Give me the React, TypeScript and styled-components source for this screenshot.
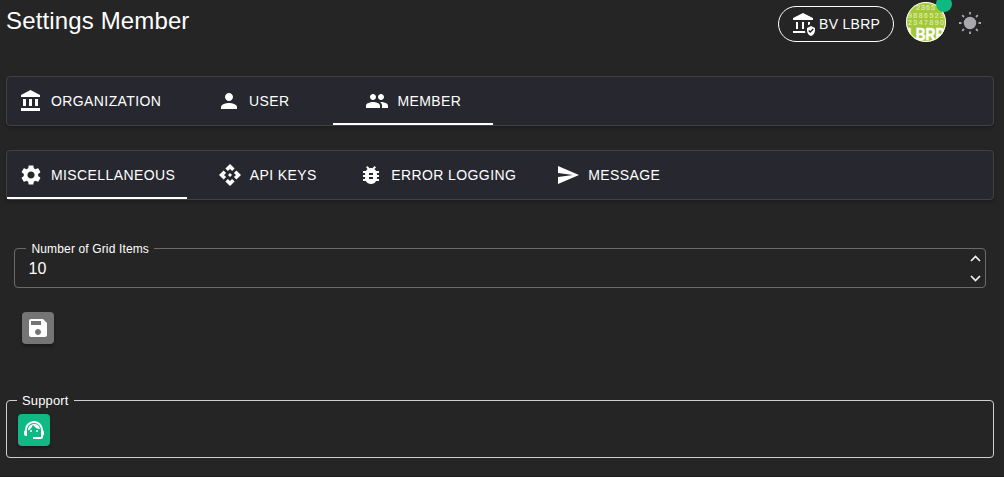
import React from 'react';
import styled, { createGlobalStyle } from 'styled-components';
import {
  MdPerson, MdPeople, MdSettings, MdApi, MdSend,
  MdSave, MdSupportAgent, MdAssuredWorkload,
} from 'react-icons/md';

const GlobalStyle = createGlobalStyle`
  * { box-sizing: border-box; }
  body {
    margin: 0;
    background: #252525;
    color: #fff;
    font-family: "Liberation Sans", Arial, sans-serif;
    overflow: hidden;
  }
  button { font: inherit; color: inherit; border: 0; padding: 0; background: none; }
`;

const Page = styled.main`
  height: 477px;
  padding: 0 10px 0 6px;
  display: flex;
  flex-direction: column;
  border-bottom: 1px solid #1c1c1c;
`;

const Header = styled.header`
  display: flex;
  align-items: flex-start;
  justify-content: space-between;
  height: 76px;
`;

const Title = styled.h1`
  margin: 0;
  padding-top: 5px;
  font-size: 24px;
  line-height: 32px;
  font-weight: 400;
  letter-spacing: 0.14px;
`;

const Actions = styled.div`
  display: flex;
  align-items: flex-start;
`;

const OrgChip = styled.button`
  display: flex;
  align-items: center;
  gap: 4px;
  width: 116px;
  height: 36px;
  margin-top: 6px;
  padding-left: 12px;
  border: 1px solid #fff;
  border-radius: 18px;
  font-size: 14px;
  letter-spacing: 0.3px;
  white-space: nowrap;
`;

const AvatarWrap = styled.div`
  position: relative;
  width: 40px;
  height: 40px;
  margin: 2px 0 0 12px;
`;

const StatusBadge = styled.span`
  position: absolute;
  top: -6px;
  right: -6px;
  width: 16px;
  height: 16px;
  border-radius: 50%;
  background: #10b981;
`;

const ThemeButton = styled.button`
  display: flex;
  margin: 11px 12px 0 12px;
`;

const TabBar = styled.nav`
  display: flex;
  height: 50px;
  margin-bottom: 24px;
  background: #27272f;
  border: 1px solid #424246;
  border-radius: 4px;
  box-shadow: 0 2px 3px rgba(0, 0, 0, 0.25);
`;

const Tab = styled.button<{ $active?: boolean }>`
  display: flex;
  align-items: center;
  justify-content: center;
  gap: 8px;
  min-width: 160px;
  padding: 0 12px;
  font-size: 14px;
  letter-spacing: 0.4px;
  white-space: nowrap;
  box-shadow: ${(p) => (p.$active ? 'inset 0 -2px 0 #fff' : 'none')};
  svg { flex: none; }
`;

const NumberField = styled.fieldset`
  display: flex;
  justify-content: space-between;
  height: 46px;
  margin: 18px 8px 0;
  padding: 0 4px 0 11px;
  min-width: 0;
  border: 1px solid #6b6b6b;
  border-radius: 4px;
`;

const FieldLegend = styled.legend`
  padding: 0 5px 0 5.5px;
  height: 13px;
  font-size: 12px;
  line-height: 14px;
  letter-spacing: 0.14px;
`;

const Value = styled.span`
  padding-left: 2.5px;
  font-size: 16px;
  line-height: 28px;
`;

const Stepper = styled.div`
  display: flex;
  flex-direction: column;
  justify-content: space-between;
  height: 27px;
`;

const IconButton = styled.button<{ $color: string }>`
  display: flex;
  align-items: center;
  justify-content: center;
  width: 32px;
  height: 32px;
  border-radius: 4px;
  background: ${(p) => p.$color};
  box-shadow: 0 2px 3px rgba(0, 0, 0, 0.35);
`;

const SaveRow = styled.div`
  padding: 24px 16px 0;
  height: 104px;
`;

const SupportBox = styled.fieldset`
  height: 66px;
  margin: 0;
  padding: 6px 11px 0;
  min-width: 0;
  border: 1px solid #d0d0d0;
  border-radius: 4px;
`;

const SupportLegend = styled.legend`
  margin-left: -1px;
  padding: 0 5px;
  height: 16px;
  font-size: 13px;
  line-height: 17px;
  letter-spacing: 0.15px;
`;

const Avatar = () => (
  <svg width="40" height="40" viewBox="0 0 40 40">
    <defs><clipPath id="disc"><circle cx="20" cy="20" r="20" /></clipPath></defs>
    <g clipPath="url(#disc)" fontFamily="Liberation Sans, sans-serif">
      <rect x="0" y="0" width="40" height="40" fill="#a4c83a" />
      <g fill="#dcebaa" stroke="#dcebaa" strokeWidth="0.2" fontSize="7">
        <text x="10" y="8" textLength="19">2365</text>
        <text x="2" y="15.5" textLength="36">9886523</text>
        <text x="2" y="23" textLength="36">2347890</text>
      </g>
      <text x="1.5" y="37.5" fontSize="17" fontWeight="700" fill="#fff" stroke="#fff" strokeWidth="0.6" textLength="37" lengthAdjust="spacingAndGlyphs">LBRP</text>
    </g>
    <circle cx="20" cy="20" r="19.5" fill="none" stroke="#fff" />
  </svg>
);

const Sun = () => (
  <svg width="24" height="24" viewBox="0 0 24 24" fill="#a9a9ae" stroke="#a9a9ae" strokeWidth="1.8">
    <circle cx="12" cy="12" r="5.3" />
    <path d="M12 1v2.5M12 20.5V23M1 12h2.5M20.5 12H23M4.2 4.2L6 6M18 18l1.8 1.8M4.2 19.8L6 18M18 6l1.8-1.8" />
  </svg>
);

const Bank = () => (
  <svg width="24" height="24" viewBox="0 0 24 24" fill="currentColor">
    <path d="M4 10v7h3v-7H4zm6 0v7h3v-7h-3zM2 22h19v-3H2v3zm14-12v7h3v-7h-3zm-4.5-9L2 6v2h19V6l-9.5-5z" />
  </svg>
);

const Bug = () => (
  <svg width="24" height="24" viewBox="0 0 24 24" fill="currentColor">
    <path d="M20 8h-2.81c-.45-.78-1.07-1.45-1.82-1.96L17 4.41 15.59 3l-2.17 2.17C12.96 5.06 12.49 5 12 5c-.49 0-.96.06-1.41.17L8.41 3 7 4.41l1.62 1.63C7.88 6.55 7.26 7.22 6.81 8H4v2h2.09c-.05.33-.09.66-.09 1v1H4v2h2v1c0 .34.04.67.09 1H4v2h2.81c1.04 1.79 2.97 3 5.19 3s4.15-1.21 5.19-3H20v-2h-2.09c.05-.33.09-.66.09-1v-1h2v-2h-2v-1c0-.34-.04-.67-.09-1H20V8zm-6 8h-4v-2h4v2zm0-4h-4v-2h4v2z" />
  </svg>
);

const Chevron = ({ d }: { d: string }) => (
  <svg width="11" height="7" viewBox="0 0 11 7" fill="none" stroke="#f2f2f2" strokeWidth="1.7"><path d={d} /></svg>
);

export default function App() {
  return (
    <>
      <GlobalStyle />
      <Page>
        <Header>
          <Title>Settings Member</Title>
          <Actions>
            <OrgChip><MdAssuredWorkload size={24} />BV LBRP</OrgChip>
            <AvatarWrap><Avatar /><StatusBadge /></AvatarWrap>
            <ThemeButton aria-label="Theme"><Sun /></ThemeButton>
          </Actions>
        </Header>
        <TabBar>
          <Tab><Bank />ORGANIZATION</Tab>
          <Tab><MdPerson size={24} />USER</Tab>
          <Tab $active><MdPeople size={24} />MEMBER</Tab>
        </TabBar>
        <TabBar>
          <Tab $active><MdSettings size={24} />MISCELLANEOUS</Tab>
          <Tab><MdApi size={24} />API KEYS</Tab>
          <Tab><Bug />ERROR LOGGING</Tab>
          <Tab><MdSend size={24} />MESSAGE</Tab>
        </TabBar>
        <NumberField>
          <FieldLegend>Number of Grid Items</FieldLegend>
          <Value>10</Value>
          <Stepper>
            <Chevron d="M1 6l4.5-4.5L10 6" />
            <Chevron d="M1 1l4.5 4.5L10 1" />
          </Stepper>
        </NumberField>
        <SaveRow>
          <IconButton $color="#757575" aria-label="Save"><MdSave size={24} /></IconButton>
        </SaveRow>
        <SupportBox>
          <SupportLegend>Support</SupportLegend>
          <IconButton $color="#10b981" aria-label="Support"><MdSupportAgent size={24} /></IconButton>
        </SupportBox>
      </Page>
    </>
  );
}
